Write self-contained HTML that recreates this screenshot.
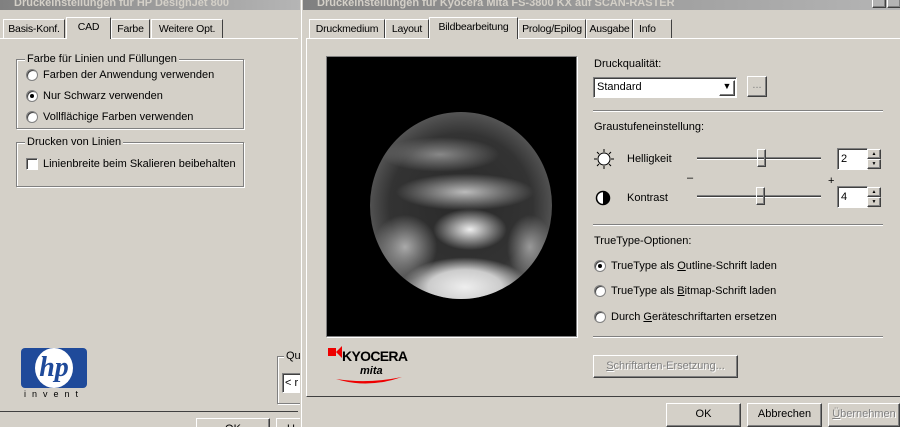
<!DOCTYPE html>
<html><head><meta charset="utf-8"><style>
*{box-sizing:border-box;margin:0;padding:0}
html,body{width:900px;height:427px;overflow:hidden}
body{background:#d4d0c8;font-family:"Liberation Sans",sans-serif;font-size:11px;color:#000;position:relative}
.a{position:absolute}
.title{background:linear-gradient(90deg,#808080,#b5b5b5);height:10px;color:#d4d0c8;font-weight:bold;font-size:11px;line-height:6px;overflow:hidden;white-space:nowrap}
.tab{position:absolute;height:20px;border:1px solid #fff;border-right:1px solid #404040;border-bottom:none;line-height:18px;text-align:center;background:#d4d0c8;font-size:10.5px;white-space:nowrap;overflow:hidden;letter-spacing:-0.2px}
.tab.sel{height:22px;z-index:2}
.grp{position:absolute;border:1px solid #808080;box-shadow:1px 1px 0 #fff, inset 1px 1px 0 #fff}
.legend{position:absolute;top:-7px;left:8px;background:#d4d0c8;padding:0 2px;line-height:12px}
.radio{position:absolute;width:12px;height:12px;border-radius:50%;background:#fff;border:1px solid #808080;box-shadow:inset 1px 1px 0 #404040}
.radio.on::after{content:"";position:absolute;left:3px;top:3px;width:4px;height:4px;border-radius:50%;background:#000}
.lbl{position:absolute;line-height:13px;white-space:nowrap}
.btn{position:absolute;height:23px;border:1px solid #fff;border-right-color:#404040;border-bottom-color:#404040;box-shadow:inset -1px -1px 0 #808080;text-align:center;line-height:21px}
.sep{position:absolute;height:2px;border-top:1px solid #808080;border-bottom:1px solid #fff}
.sunk{position:absolute;background:#fff;border:1px solid #808080;border-right-color:#fff;border-bottom-color:#fff;box-shadow:inset 1px 1px 0 #404040}
u{text-decoration:underline}
.cl{position:absolute;border-radius:50%}
</style></head><body>
<!-- left window -->
<div class="a title" style="left:0;top:0;width:300px;padding-left:14px">Druckeinstellungen für HP DesignJet 800</div>
<div class="tab" style="left:3px;top:19px;width:62px">Basis-Konf.</div>
<div class="tab sel" style="left:66px;top:17px;width:45px">CAD</div>
<div class="tab" style="left:111px;top:19px;width:39px">Farbe</div>
<div class="tab" style="left:151px;top:19px;width:72px">Weitere Opt.</div>
<div class="a" style="left:0;top:38px;width:298px;height:374px;border-top:1px solid #fff;border-bottom:1px solid #404040"></div>
<div class="grp" style="left:16px;top:59px;width:228px;height:70px"><span class="legend">Farbe für Linien und Füllungen</span></div>
<div class="radio" style="left:26px;top:69px"></div><div class="lbl" style="left:43px;top:69px">Farben der Anwendung verwenden</div>
<div class="radio on" style="left:26px;top:90px"></div><div class="lbl" style="left:43px;top:90px">Nur Schwarz verwenden</div>
<div class="radio" style="left:26px;top:111px"></div><div class="lbl" style="left:43px;top:111px">Vollflächige Farben verwenden</div>
<div class="grp" style="left:16px;top:142px;width:228px;height:45px"><span class="legend">Drucken von Linien</span></div>
<div class="sunk" style="left:26px;top:158px;width:12px;height:12px"></div><div class="lbl" style="left:43px;top:158px">Linienbreite beim Skalieren beibehalten</div>
<div class="a" style="left:21px;top:348px;width:66px;height:40px;background:#1f4a9a;border-radius:4px"></div>
<div class="a" style="left:35px;top:348px;width:38px;height:40px;border-radius:50%;background:#fff"></div>
<div class="a" style="left:31px;top:347px;width:46px;height:42px;color:#1f4a9a;font:italic bold 28px 'Liberation Serif',serif;text-align:center;line-height:42px">hp</div>
<div class="a" style="left:24px;top:389px;font-size:9px;letter-spacing:6px">invent</div>
<div class="grp" style="left:277px;top:356px;width:30px;height:48px"><span class="legend" style="left:6px">Qu</span></div>
<div class="sunk" style="left:282px;top:373px;width:20px;height:20px;padding-left:2px;line-height:18px">&lt; r</div>
<div class="btn" style="left:196px;top:418px;width:74px">OK</div>
<div class="btn" style="left:276px;top:418px;width:30px">U</div>
<!-- right window -->
<div class="a" style="left:300px;top:0;width:600px;height:427px;background:#d4d0c8;border-left:1px solid #d4d0c8;box-shadow:inset 1px 0 0 #fff"></div>
<div class="a title" style="left:303px;top:0;width:597px;padding-left:14px">Druckeinstellungen für Kyocera Mita FS-3800 KX auf SCAN-RASTER</div>
<div class="tab" style="left:309px;top:19px;width:76px">Druckmedium</div>
<div class="tab" style="left:385px;top:19px;width:44px">Layout</div>
<div class="tab sel" style="left:429px;top:17px;width:89px">Bildbearbeitung</div>
<div class="tab" style="left:518px;top:19px;width:68px">Prolog/Epilog</div>
<div class="tab" style="left:586px;top:19px;width:47px">Ausgabe</div>
<div class="tab" style="left:633px;top:19px;width:39px;text-align:left;padding-left:5px">Info</div>
<div class="a" style="left:306px;top:38px;width:594px;height:359px;border-top:1px solid #fff;border-left:1px solid #fff;border-bottom:1px solid #404040"></div>
<div class="a" style="left:326px;top:56px;width:251px;height:281px;background:#000;border:1px solid #808080;box-shadow:1px 1px 0 #fff"></div>
<div class="a" style="left:370px;top:112px;width:182px;height:187px;border-radius:50%;overflow:hidden;background:radial-gradient(circle at 50% 50%,#2a2a2a 0%,#333 55%,#666 80%,#aaa 100%)">
<div class="cl" style="left:10px;top:25px;width:120px;height:35px;background:radial-gradient(ellipse,#888 0%,rgba(0,0,0,0) 70%)"></div>
<div class="cl" style="left:20px;top:60px;width:150px;height:40px;background:radial-gradient(ellipse,#bbb 0%,rgba(0,0,0,0) 65%)"></div>
<div class="cl" style="left:0px;top:100px;width:70px;height:70px;background:radial-gradient(ellipse,#aaa 0%,rgba(0,0,0,0) 65%)"></div>
<div class="cl" style="left:60px;top:95px;width:80px;height:45px;background:radial-gradient(ellipse,#eee 0%,rgba(0,0,0,0) 65%)"></div>
<div class="cl" style="left:135px;top:100px;width:50px;height:70px;background:radial-gradient(ellipse,#999 0%,rgba(0,0,0,0) 65%)"></div>
<div class="cl" style="left:30px;top:145px;width:130px;height:60px;background:radial-gradient(ellipse,#eee 0%,#ccc 40%,rgba(0,0,0,0) 70%)"></div>
</div>
<svg class="a" style="left:328px;top:344px" width="90" height="45"><path d="M0 4h8v8H0z M8 8l6-6v12z" fill="#e00"/><text x="14" y="17" font-family="Liberation Sans" font-weight="bold" font-size="14" fill="#000" textLength="66">KYOCERA</text><text x="32" y="30" font-family="Liberation Sans" font-style="italic" font-weight="bold" font-size="11">mita</text><path d="M8 35 Q40 45 74 33 Q40 40 8 35z" fill="#e00"/></svg>
<div class="lbl" style="left:594px;top:58px">Druckqualität:</div>
<div class="sunk" style="left:593px;top:77px;width:144px;height:21px;padding-left:3px;line-height:19px">Standard</div>
<div class="btn" style="left:719px;top:80px;width:16px;height:16px;line-height:10px;font-size:9px">▼</div>
<div class="btn" style="left:747px;top:76px;width:20px;height:21px;color:#808080;line-height:16px">...</div>
<div class="sep" style="left:593px;top:110px;width:290px"></div>
<div class="lbl" style="left:594px;top:121px">Graustufeneinstellung:</div>
<svg class="a" style="left:593px;top:148px" width="22" height="22"><circle cx="11" cy="11" r="6" fill="#fff" stroke="#000"/><g stroke="#000"><path d="M11 1v3M11 18v3M1 11h3M18 11h3M4 4l2 2M16 16l2 2M4 18l2-2M16 6l2-2"/></g></svg>
<div class="lbl" style="left:627px;top:153px">Helligkeit</div>
<div class="a" style="left:697px;top:157px;width:124px;height:3px;border-top:1px solid #808080;border-bottom:1px solid #fff;background:#404040"></div>
<div class="btn" style="left:757px;top:149px;width:9px;height:18px"></div>
<div class="sunk" style="left:837px;top:148px;width:31px;height:22px;padding-left:3px;line-height:20px">2</div>
<div class="btn" style="left:867px;top:149px;width:14px;height:10px;font-size:5px;line-height:8px">▲</div>
<div class="btn" style="left:867px;top:159px;width:14px;height:10px;font-size:5px;line-height:8px">▼</div>
<div class="lbl" style="left:687px;top:172px">–</div>
<div class="lbl" style="left:828px;top:175px">+</div>
<svg class="a" style="left:595px;top:190px" width="16" height="16"><circle cx="8" cy="8" r="6.5" fill="#fff" stroke="#000" stroke-width="1.5"/><path d="M8 1.5a6.5 6.5 0 0 1 0 13z" fill="#000"/></svg>
<div class="lbl" style="left:627px;top:192px">Kontrast</div>
<div class="a" style="left:697px;top:195px;width:124px;height:3px;border-top:1px solid #808080;border-bottom:1px solid #fff;background:#404040"></div>
<div class="btn" style="left:756px;top:187px;width:9px;height:18px"></div>
<div class="sunk" style="left:837px;top:186px;width:31px;height:22px;padding-left:3px;line-height:20px">4</div>
<div class="btn" style="left:867px;top:187px;width:14px;height:10px;font-size:5px;line-height:8px">▲</div>
<div class="btn" style="left:867px;top:197px;width:14px;height:10px;font-size:5px;line-height:8px">▼</div>
<div class="sep" style="left:593px;top:224px;width:290px"></div>
<div class="lbl" style="left:594px;top:235px">TrueType-Optionen:</div>
<div class="radio on" style="left:594px;top:260px"></div><div class="lbl" style="left:611px;top:260px">TrueType als <u>O</u>utline-Schrift laden</div>
<div class="radio" style="left:594px;top:285px"></div><div class="lbl" style="left:611px;top:285px">TrueType als <u>B</u>itmap-Schrift laden</div>
<div class="radio" style="left:594px;top:311px"></div><div class="lbl" style="left:611px;top:311px">Durch <u>G</u>eräteschriftarten ersetzen</div>
<div class="sep" style="left:593px;top:336px;width:290px"></div>
<div class="btn" style="left:593px;top:355px;width:145px;color:#808080;text-shadow:1px 1px 0 #fff"><u>S</u>chriftarten-Ersetzung...</div>
<div class="btn" style="left:666px;top:403px;width:75px;height:24px">OK</div>
<div class="btn" style="left:747px;top:403px;width:75px;height:24px">Abbrechen</div>
<div class="btn" style="left:828px;top:403px;width:72px;height:24px;color:#808080;text-shadow:1px 1px 0 #fff"><u>Ü</u>bernehmen</div>
<div class="btn" style="left:872px;top:-6px;width:14px;height:14px"></div>
<div class="btn" style="left:887px;top:-6px;width:14px;height:14px"></div>
</body></html>
